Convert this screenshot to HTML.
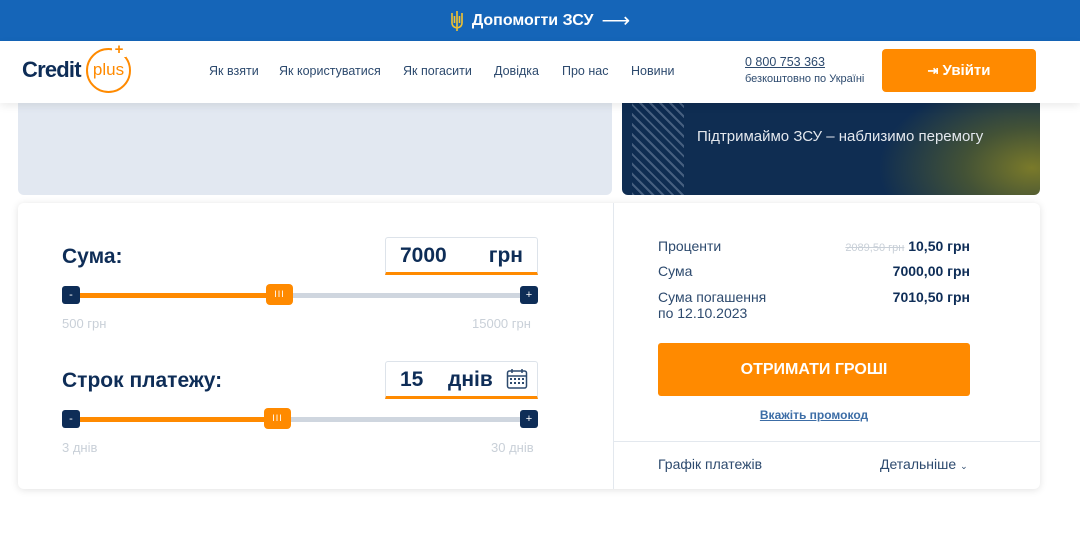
<!DOCTYPE html>
<html><head><meta charset="utf-8"><style>
*{margin:0;padding:0;box-sizing:border-box}
body{width:1080px;height:534px;background:#fff;font-family:"Liberation Sans",sans-serif;position:relative;overflow:hidden;color:#0e2d57}
.a{position:absolute}
.top{left:0;top:0;width:1080px;height:41px;background:#1565b8;color:#fff;font-weight:bold;font-size:16px;display:flex;align-items:center;justify-content:center;gap:8px}
.hdr{left:0;top:41px;width:1080px;height:62px;background:#fff;box-shadow:0 3px 8px rgba(0,0,0,.08);z-index:2}
.nav{font-size:12.5px;color:#2d4a6e;top:64px}
.card{left:18px;top:203px;width:1022px;height:286px;background:#fff;border-radius:6px;box-shadow:0 1px 8px rgba(0,0,0,.12)}
.lbl{font-size:21px;font-weight:bold;color:#0e2d57}
.box{border:1px solid #dde3ea;border-bottom:3px solid #ff8a00;border-radius:3px 3px 0 0;font-weight:bold;color:#0e2d57;font-size:21px}
.track{height:5px;background:#cfd6df;border-radius:3px}
.fill{height:5px;background:#ff8a00}
.sq{width:18px;height:18px;background:#0e2d57;border-radius:3px;color:#fff;font-size:11px;text-align:center;line-height:18px}
.th{width:27px;height:21px;background:#ff8a00;border-radius:4px;color:#fff;font-size:9px;text-align:center;line-height:21px;letter-spacing:1px}
.mut{font-size:13px;color:#c9d0d8}
.rt{font-size:14px;color:#2d4a6e}
.rv{font-size:14px;font-weight:bold;color:#0e2d57;text-align:right}
</style></head><body>
<div class="a top"><svg width="14" height="22" viewBox="0 0 14 22"><path d="M7 1v16M2 3v10q0 4 5 5q5-1 5-5V3M4.5 6v7M9.5 6v7M7 18v3" stroke="#f2c230" stroke-width="1.6" fill="none"/></svg>Допомогти ЗСУ <span style="font-size:20px;font-weight:normal">⟶</span></div>
<div class="a hdr">
<div class="a" style="left:22px;top:16px;font-size:22px;font-weight:bold;color:#0e2d57;letter-spacing:-.8px">Credit</div>
<div class="a" style="left:86px;top:7px;width:45px;height:45px;border:2px solid #ff8a00;border-radius:50%;color:#ff8a00;font-size:17px;text-align:center;line-height:40px">plus</div>
<div class="a" style="left:112px;top:2px;width:14px;height:14px;background:#fff;color:#ff8a00;font-weight:bold;font-size:15px;line-height:14px;text-align:center">+</div>
</div>
<div class="a nav" style="left:209px;z-index:3">Як взяти</div>
<div class="a nav" style="left:279px;z-index:3">Як користуватися</div>
<div class="a nav" style="left:403px;z-index:3">Як погасити</div>
<div class="a nav" style="left:494px;z-index:3">Довідка</div>
<div class="a nav" style="left:562px;z-index:3">Про нас</div>
<div class="a nav" style="left:631px;z-index:3">Новини</div>
<div class="a" style="left:745px;top:55px;font-size:12.5px;color:#2d4a6e;text-decoration:underline;z-index:3">0 800 753 363</div>
<div class="a" style="left:745px;top:73px;font-size:11px;color:#2d4a6e;z-index:3">безкоштовно по Україні</div>
<div class="a" style="left:882px;top:49px;width:154px;height:43px;background:#ff8a00;border-radius:4px;color:#fff;font-weight:bold;font-size:15px;line-height:43px;text-align:center;z-index:3"><span style="font-size:13px">⇥</span> Увійти</div>
<div class="a" style="left:18px;top:98px;width:594px;height:97px;background:#e2e8f1;border-radius:0 0 6px 6px"></div>
<div class="a" style="left:622px;top:98px;width:418px;height:97px;border-radius:0 0 6px 6px;background:radial-gradient(ellipse 170px 100px at 410px 70px,#7a7a2a 0%,#435236 40%,#0f2d52 90%);overflow:hidden">
<div class="a" style="left:10px;top:0;width:52px;height:97px;background:repeating-linear-gradient(45deg,#5e7593 0 2px,#0f2d52 2px 7px),repeating-linear-gradient(-45deg,#5e7593 0 2px,transparent 2px 7px);opacity:.7"></div>
<div class="a" style="left:75px;top:30px;color:#e4e8ee;font-size:15px">Підтримаймо ЗСУ – наблизимо перемогу</div>
</div>
<div class="a card"></div>
<div class="a" style="left:613px;top:203px;width:1px;height:286px;background:#e3e8ee"></div>
<div class="a" style="left:614px;top:441px;width:426px;height:1px;background:#e3e8ee"></div>
<div class="a lbl" style="left:62px;top:245px">Сума:</div>
<div class="a box" style="left:385px;top:237px;width:153px;height:38px"><span class="a" style="left:14px;top:6px">7000</span><span class="a" style="right:14px;top:6px">грн</span></div>
<div class="a track" style="left:70px;top:293px;width:462px"></div>
<div class="a fill" style="left:70px;top:293px;width:200px"></div>
<div class="a sq" style="left:62px;top:286px">-</div><div class="a sq" style="left:520px;top:286px">+</div>
<div class="a th" style="left:266px;top:284px">III</div>
<div class="a mut" style="left:62px;top:316px">500 грн</div><div class="a mut" style="left:472px;top:316px">15000 грн</div>
<div class="a lbl" style="left:62px;top:369px">Строк платежу:</div>
<div class="a box" style="left:385px;top:361px;width:153px;height:38px"><span class="a" style="left:14px;top:6px">15</span><span class="a" style="left:62px;top:6px">днів</span>
<svg class="a" style="left:120px;top:6px" width="22" height="22" viewBox="0 0 22 22"><rect x="1.5" y="3" width="19" height="17" rx="2" fill="none" stroke="#2d4a6e" stroke-width="1.5"/><path d="M1.5 8h19M6 1v4M16 1v4" stroke="#2d4a6e" stroke-width="1.5"/><g fill="#2d4a6e"><rect x="4" y="10" width="2" height="2"/><rect x="8" y="10" width="2" height="2"/><rect x="12" y="10" width="2" height="2"/><rect x="16" y="10" width="2" height="2"/><rect x="4" y="14" width="2" height="2"/><rect x="8" y="14" width="2" height="2"/><rect x="12" y="14" width="2" height="2"/><rect x="16" y="14" width="2" height="2"/></g></svg></div>
<div class="a track" style="left:70px;top:417px;width:462px"></div>
<div class="a fill" style="left:70px;top:417px;width:198px"></div>
<div class="a sq" style="left:62px;top:410px">-</div><div class="a sq" style="left:520px;top:410px">+</div>
<div class="a th" style="left:264px;top:408px">III</div>
<div class="a mut" style="left:62px;top:440px">3 днів</div><div class="a mut" style="left:491px;top:440px">30 днів</div>
<div class="a rt" style="left:658px;top:238px">Проценти</div>
<div class="a rv" style="left:760px;top:238px;width:210px"><span style="font-weight:normal;color:#c9d0d8;text-decoration:line-through;font-size:11px">2089,50 грн</span> 10,50 грн</div>
<div class="a rt" style="left:658px;top:263px">Сума</div>
<div class="a rv" style="left:760px;top:263px;width:210px">7000,00 грн</div>
<div class="a rt" style="left:658px;top:289px;line-height:16px">Сума погашення<br>по 12.10.2023</div>
<div class="a rv" style="left:760px;top:289px;width:210px">7010,50 грн</div>
<div class="a" style="left:658px;top:343px;width:312px;height:53px;background:#ff8a00;border-radius:3px;color:#fff;font-weight:bold;font-size:16px;text-align:center;line-height:53px">ОТРИМАТИ ГРОШІ</div>
<div class="a" style="left:658px;top:408px;width:312px;text-align:center;font-size:12px;font-weight:bold;color:#3c6da6;text-decoration:underline">Вкажіть промокод</div>
<div class="a rt" style="left:658px;top:456px">Графік платежів</div>
<div class="a rt" style="left:880px;top:456px">Детальніше <span style="font-size:9px">⌄</span></div>
</body></html>
